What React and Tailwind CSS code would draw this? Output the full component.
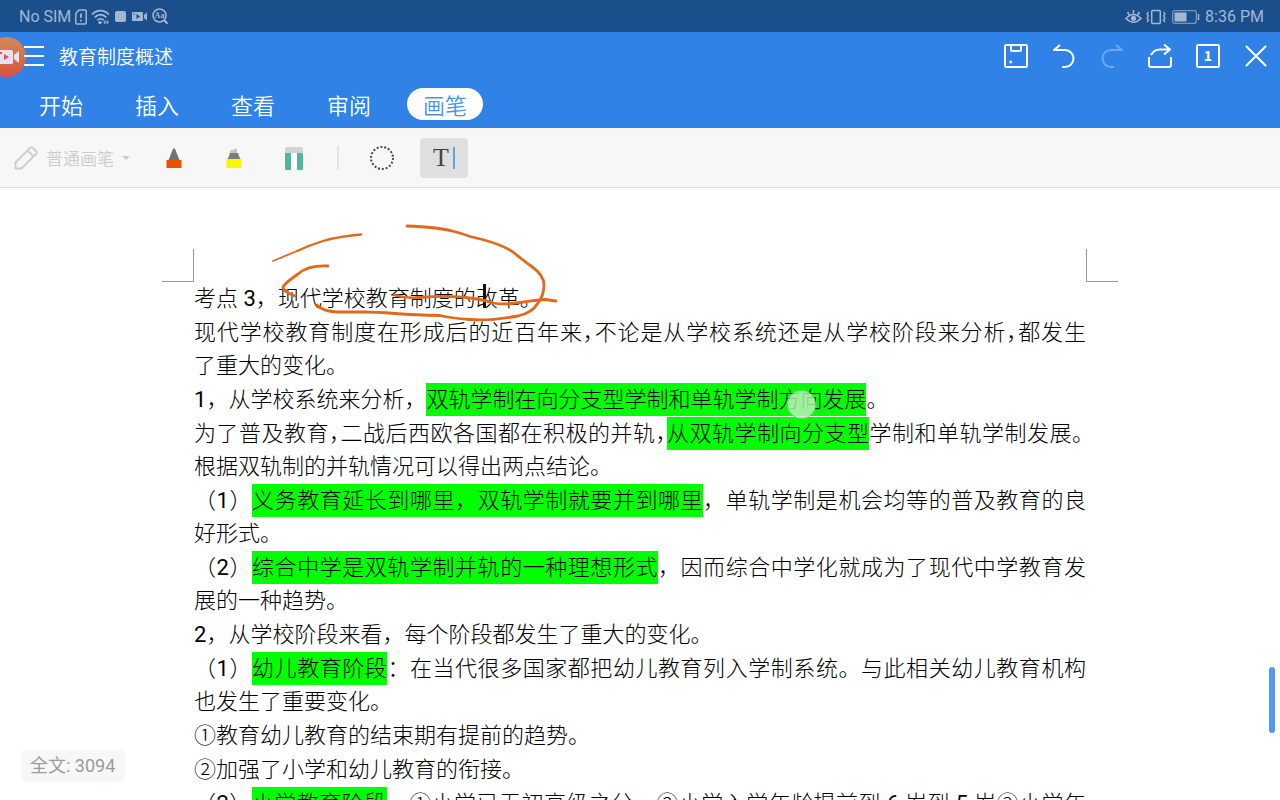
const TABS = ["开始", "插入", "查看", "审阅", "画笔"];

// comma that takes half a cell, as the editor sets it in tight lines
const comma = (key) => (
    <span key={key} className="[font-feature-settings:'halt']">，</span>
);
const num = (n) => (
    <span key={"n" + n} className="font-normal">{n}</span>
);
const mark = (text) => (
    <mark key={text} className="bg-[#00ff00] text-black py-1">{text}</mark>
);

// each paragraph is a list of set lines
const PARAGRAPHS = [
    [{ text: ["考点 ", num(3), "，现代学校教育制度的改革。"] }],
    [
        {
            full: true,
            text: ["现代学校教育制度在形成后的近百年来", comma("a"), "不论是从学校系统还是从学校阶段来分析", comma("b"), "都发生"],
        },
        { text: "了重大的变化。" },
    ],
    [{ text: [num(1), "，从学校系统来分析，", mark("双轨学制在向分支型学制和单轨学制方向发展"), "。"] }],
    [
        {
            full: true,
            hang: true,
            text: ["为了普及教育", comma("a"), "二战后西欧各国都在积极的并轨", comma("b"), mark("从双轨学制向分支型"), "学制和单轨学制发展。"],
        },
        { text: "根据双轨制的并轨情况可以得出两点结论。" },
    ],
    [
        { full: true, text: ["（", num(1), "）", mark("义务教育延长到哪里，双轨学制就要并到哪里"), "，单轨学制是机会均等的普及教育的良"] },
        { text: "好形式。" },
    ],
    [
        { full: true, text: ["（", num(2), "）", mark("综合中学是双轨学制并轨的一种理想形式"), "，因而综合中学化就成为了现代中学教育发"] },
        { text: "展的一种趋势。" },
    ],
    [{ text: [num(2), "，从学校阶段来看，每个阶段都发生了重大的变化。"] }],
    [
        { full: true, text: ["（", num(1), "）", mark("幼儿教育阶段"), "：在当代很多国家都把幼儿教育列入学制系统。与此相关幼儿教育机构"] },
        { text: "也发生了重要变化。" },
    ],
    [{ text: "①教育幼儿教育的结束期有提前的趋势。" }],
    [{ text: "②加强了小学和幼儿教育的衔接。" }],
    [
        {
            full: true,
            text: ["（", num(2), "）", mark("小学教育阶段"), "，①小学已无初高级之分，②小学入学年龄提前到 ", num(6), " 岁到 ", num(5), " 岁③小学年"],
        },
    ],
];

function StatusBar() {
    return (
        <div className="h-8 shrink-0 bg-[#1a4f8b] text-[#a3b7d3] flex items-center justify-between pl-[19px] pr-4 pt-px text-base">
            <div className="flex items-center gap-1">
                <span>No SIM</span>
                <svg width="12" height="16" viewBox="0 0 12 16" fill="none" stroke="currentColor" strokeWidth="1.5">
                    <path d="M4 1h6.2q1 0 1 1v12q0 1-1 1H1.8q-1 0-1-1V4.2z" />
                    <path d="M6 4.5v4.5M6 10.8v1.8" strokeWidth="1.8" />
                </svg>
                <svg width="20" height="16" viewBox="0 0 20 16" fill="none" stroke="currentColor" strokeWidth="1.7">
                    <path d="M1 5.5C6 .3 13 .3 18 5.5M3.6 8.4C7.3 4.8 11.7 4.8 15.4 8.4M6.2 11.2q3.3-2.8 6.6 0" />
                    <circle cx="9" cy="13.6" r="1.7" fill="currentColor" stroke="none" />
                    <path d="M14.5 11v4.6l-2.3-2.3zM15.7 11v4.6l2.3-2.3z" fill="currentColor" stroke="none" />
                </svg>
                <span className="size-[11px] rounded-xs bg-current" />
                <svg className="ml-0.5" width="16" height="11" viewBox="0 0 16 11" fill="currentColor">
                    <path fillRule="evenodd" d="M1 1h9q1 0 1 1v7q0 1-1 1H1q-1 0-1-1V2q0-1 1-1zM4.5 3v5L8 5.5zM1.3 2.4v1.2h1.4V2.4z" />
                    <path d="M12 4l3-2.5v8L12 7z" />
                </svg>
                <svg width="17" height="17" viewBox="0 0 17 17">
                    <circle cx="7.5" cy="7.5" r="6.5" fill="none" stroke="currentColor" strokeWidth="1.5" />
                    <path d="M12 12l3.5 3.8" stroke="currentColor" strokeWidth="2" />
                    <text x="7.5" y="10" textAnchor="middle" fill="currentColor" className="text-[8px] font-bold font-['Liberation_Serif',serif]">Aa</text>
                </svg>
            </div>
            <div className="flex items-center gap-1">
                <svg width="17" height="16" viewBox="0 0 17 16" fill="none" stroke="currentColor" strokeWidth="1.6">
                    <path d="M1 9.5Q8.5 1.5 16 9.5 8.5 17 1 9.5zM8.5 1v3.5M2.5 3l1.7 2.8M14.5 3l-1.7 2.8" />
                    <circle cx="8.5" cy="9.3" r="2.6" fill="currentColor" stroke="none" />
                </svg>
                <svg width="20" height="16" viewBox="0 0 20 16" fill="none" stroke="currentColor" strokeWidth="1.5">
                    <rect x="5.7" y="1.5" width="8.6" height="13" rx="1" />
                    <path d="M2.5 3L1 5l1.5 2L1 9l1.5 2L1 13M17.5 3L19 5l-1.5 2L19 9l-1.5 2 1.5 2" strokeWidth="1.3" />
                </svg>
                <svg className="ml-0.5 mr-px" width="28" height="14" viewBox="0 0 28 14">
                    <rect x=".7" y=".7" width="23.6" height="12.6" rx="2" fill="none" stroke="currentColor" strokeOpacity=".7" strokeWidth="1.3" />
                    <rect x="2.5" y="2.5" width="12" height="9" fill="currentColor" />
                    <path d="M26.5 4v6" stroke="currentColor" strokeWidth="1.5" />
                </svg>
                <span>8:36 PM</span>
            </div>
        </div>
    );
}

function HeaderButton({ label, children, disabled }) {
    return (
        <button aria-label={label} disabled={disabled} className="w-12 h-12 flex items-center justify-center disabled:opacity-30">
            <svg width="26" height="26" viewBox="0 0 26 26" fill="none" stroke="white" strokeWidth="2" strokeLinejoin="round">
                {children}
            </svg>
        </button>
    );
}

function Header() {
    return (
        <header className="relative shrink-0 bg-[#3082e7] text-white font-['Noto_Sans_CJK_SC',sans-serif]">
            {/* floating screen recorder bubble */}
            <div className="absolute -left-3.5 top-[5px] size-10 rounded-full bg-linear-to-b from-[#d08a5c] to-[#d9503f] flex items-center justify-center">
                <svg width="26" height="16" viewBox="0 0 26 16" fill="#e6e2f3">
                    <rect x="1" y="1" width="19" height="14" rx="1.5" />
                    <path d="M21 6l5-4v12l-5-4z" />
                    <path d="M11 5v6l5-3zM6 3h3v2H6z" fill="#dc5050" />
                </svg>
            </div>
            <div className="relative h-12 flex items-center justify-between">
                <div className="flex items-center gap-[15px] pl-6">
                    <button aria-label="菜单" className="w-5 h-5 flex flex-col justify-between">
                        <span className="h-0.5 w-full bg-white" />
                        <span className="h-0.5 w-full bg-white" />
                        <span className="h-0.5 w-full bg-white" />
                    </button>
                    <h1 className="text-[19px] leading-7 font-[350]">教育制度概述</h1>
                </div>
                <div className="flex">
                    <HeaderButton label="保存">
                        <rect x="2" y="2" width="22" height="22" rx="1" />
                        <path d="M8 2v5q0 1 1 1h8q1 0 1-1V2" />
                        <path d="M6.5 19h2.5" strokeWidth="2.5" />
                    </HeaderButton>
                    <HeaderButton label="撤销">
                        <path d="M9 2L3 7h11a8.5 8.5 0 0 1 0 17h-3" />
                    </HeaderButton>
                    <HeaderButton label="恢复" disabled>
                        <path d="M17 2l6 5H12a8.5 8.5 0 0 0 0 17h3" />
                    </HeaderButton>
                    <HeaderButton label="分享">
                        <path d="M2 14v8q0 2 2 2h18q2 0 2-2v-8" />
                        <path d="M4 12q3-5.5 9-5.5h9.5M17 1.5l6 5-6 5" />
                    </HeaderButton>
                    <HeaderButton label="窗口">
                        <rect x="2" y="2" width="22" height="22" rx="1" />
                        <text x="13" y="18" textAnchor="middle" fill="white" stroke="none" className="text-sm font-bold">1</text>
                    </HeaderButton>
                    <HeaderButton label="关闭">
                        <path d="M3 3l20 20M23 3L3 23" />
                    </HeaderButton>
                </div>
            </div>
            <nav className="h-12 flex items-center pl-[13px]">
                {TABS.map((tab) => (
                    <div key={tab} className="w-24 flex justify-center">
                        <button
                            className={
                                tab === "画笔"
                                    ? "rounded-full bg-white text-[#4a94e0] px-4 h-8 text-[22px] leading-8 font-[350]"
                                    : "px-4 h-8 text-[22px] leading-8 font-[350]"
                            }
                        >
                            {tab}
                        </button>
                    </div>
                ))}
            </nav>
        </header>
    );
}

function Toolbar() {
    return (
        <div className="h-[60px] shrink-0 bg-[#f7f7f7] border-b border-[#e2dede] flex items-center">
            <label className="w-36 pl-3.5 flex items-center text-[#cdcbcd]">
                <svg width="24" height="24" viewBox="0 0 24 24" fill="none" stroke="currentColor" strokeWidth="1.8" strokeLinejoin="round">
                    <path d="M1.5 22.5v-6L16.5 1.5q1-.8 2 0l4 4q.8 1 0 2L7.5 22.5zM13.5 4.5l6 6" />
                </svg>
                <select
                    disabled
                    aria-label="画笔类型"
                    className="appearance-none ml-2 w-[72px] text-[17px] opacity-100 bg-transparent font-['Noto_Sans_CJK_SC',sans-serif] font-[350]"
                >
                    <option>普通画笔</option>
                </select>
                <svg className="ml-1" width="8" height="4" viewBox="0 0 8 4" fill="currentColor">
                    <path d="M0 0h8L4 4z" />
                </svg>
            </label>
            <button aria-label="水彩笔" className="w-[60px] h-10 flex items-center justify-center">
                <svg width="16" height="20" viewBox="0 0 16 20">
                    <path d="M7 1q1-1.5 2 0l4.5 11h-11z" fill="#707273" />
                    <rect x=".5" y="12" width="15" height="8" fill="#e65400" />
                </svg>
            </button>
            <button aria-label="荧光笔" className="w-[60px] h-10 flex items-center justify-center">
                <svg width="16" height="20" viewBox="0 0 16 20">
                    <path d="M4 2.5l7-2V5H4z" fill="#c4c4c4" />
                    <path d="M3.5 5h9v2l2 4h-13l2-4z" fill="#7c7c7c" />
                    <rect x=".5" y="11" width="15" height="9" fill="#f8f800" />
                </svg>
            </button>
            <button aria-label="橡皮擦" className="w-[60px] h-10 flex items-center justify-center">
                <svg width="18" height="24" viewBox="0 0 18 24">
                    <path d="M0 7V3q0-2 2-2h14q2 0 2 2v4z" fill="#d2d2d2" />
                    <rect y="7" width="18" height="17" rx="1" fill="#4fb79c" />
                    <rect x="6" y="7" width="6" height="17" fill="white" />
                </svg>
            </button>
            <span className="ml-[13px] w-0.5 h-6 bg-[#e4e4e4]" />
            <button aria-label="套索" className="ml-[13px] w-[60px] h-10 flex items-center justify-center">
                <svg width="26" height="26" viewBox="0 0 26 26">
                    <circle cx="13" cy="13" r="11" fill="none" stroke="#444" strokeWidth="2" strokeDasharray="1.96 1.88" />
                </svg>
            </button>
            <button className="ml-2 w-12 h-10 rounded-sm bg-[#dfdfdf] flex items-center justify-center gap-1 text-[#444] font-['Liberation_Serif',serif] text-[26px]">
                T
                <span className="w-0.5 h-[22px] bg-[#62a3e0]" />
            </button>
        </div>
    );
}

function Ink() {
    return (
        <svg
            className="absolute left-0 top-0 pointer-events-none"
            width="640"
            height="140"
            viewBox="0 188 640 140"
            fill="none"
            stroke="#e2681a"
            strokeWidth="2.8"
            strokeLinecap="round"
            strokeLinejoin="round"
        >
            <path d="M273 261L297 251" strokeWidth="1.8" />
            <path d="M297 251Q310 245 323 241T361 234.5" strokeWidth="2.3" />
            <path d="M407 226Q437 227 452 231T470 236.500Q500 243 513 252 524 261 531 266 544 275 544 285 544 295 538 303 532 313 518 316 490 321 470 319.500T440 315.500Q415 315 395 313.500T365 312L337 312Q322 311 317 305" />
            <path d="M328 266Q308 265 298 274 285 283 283 287 282 291 295 296" />
            <path d="M394 295Q408 299 420 297.500 450 295 470 298 485 300 493 303 503 305 520 302.500T545 299.500L556 301" />
        </svg>
    );
}

function Line({ full, hang, text }) {
    return (
        <span className={`block ${full ? "[text-align-last:justify]" : ""} ${hang ? "-mr-2" : ""}`}>{text}</span>
    );
}

export default function App() {
    return (
        <div className="h-screen flex flex-col overflow-hidden bg-white font-[Roboto,'Noto_Sans_CJK_SC',sans-serif]">
            <StatusBar />
            <Header />
            <Toolbar />
            <main className="relative flex-1 min-h-0 overflow-hidden pt-[61px]">
                {/* page margin corners */}
                <div className="flex justify-between px-[162px]">
                    <span className="w-8 h-[33px] border-r border-b border-[#999]" />
                    <span className="w-8 h-[33px] border-l border-b border-[#999]" />
                </div>
                <article className="px-[194px] flex flex-col gap-px text-[22px] leading-[33px] text-black font-light">
                    {PARAGRAPHS.map((lines, i) => (
                        <p key={i}>
                            {lines.map((line, j) => (
                                <Line key={j} {...line} />
                            ))}
                        </p>
                    ))}
                </article>

                <span className="absolute left-[483px] top-24 w-[3px] h-6 bg-[#111]" />
                <Ink />

                {/* touch point */}
                <span className="absolute left-[787px] top-[202px] size-[29px] rounded-full bg-[#c4f0c0]/80 border border-[#5fb85f]/60" />

                <span className="absolute left-[22px] bottom-[18px] h-8 pl-2 pr-2.5 rounded-sm bg-[#f7f7f7] text-[#9a9a9a] text-lg leading-8">
                    全文: 3094
                </span>
                <span className="absolute right-[5px] bottom-[67px] w-1.5 h-[66px] rounded-full bg-[#4f99f3]" />
            </main>
        </div>
    );
}
